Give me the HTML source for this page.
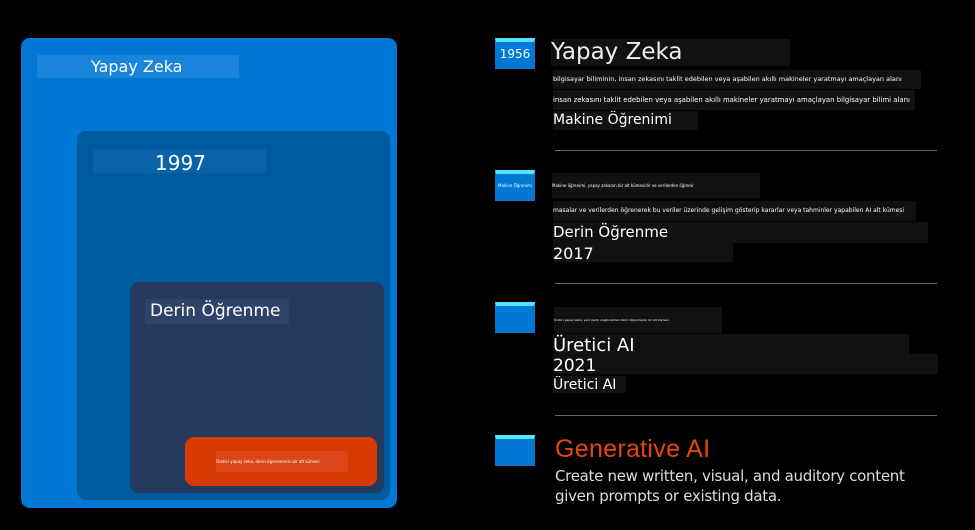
<!DOCTYPE html><html><head><meta charset="utf-8"><style>
body{margin:0;width:975px;height:530px;background:#000;position:relative;overflow:hidden;font-family:"DejaVu Sans","Liberation Sans",sans-serif;color:#fff}
div{position:absolute;box-sizing:border-box}
.bx{border-radius:9px}
.lb{white-space:nowrap}
.ic{width:40px;height:31px;background:#0078d4;border:1px solid #1a6fb8;border-top:4px solid #50e6ff}
.r{background:#111;white-space:nowrap;overflow:hidden}
.hr{left:555px;width:382px;height:1px;background:#666}
.sm{font-size:7px;line-height:1}
</style></head><body>
<div class="bx" style="left:21px;top:38px;width:376px;height:470px;background:#0078d4"></div>
<div style="left:37px;top:55px;width:202px;height:23px;background:#1a84da"></div>
<div class="lb" style="left:91px;top:57px;font-size:16px">Yapay Zeka</div>
<div class="bx" style="left:77px;top:131px;width:313px;height:369px;background:#005a9e"></div>
<div style="left:93px;top:149px;width:173px;height:24px;background:#0a62a9"></div>
<div class="lb" style="left:155px;top:151px;font-size:20px">1997</div>
<div class="bx" style="left:130px;top:282px;width:254px;height:211px;background:#243a5e"></div>
<div style="left:145px;top:299px;width:144px;height:25px;background:#2d4468"></div>
<div class="lb" style="left:150px;top:301px;font-size:17px">Derin Öğrenme</div>
<div class="bx" style="left:185px;top:437px;width:192px;height:49px;background:#d83b01"></div>
<div style="left:216px;top:451px;width:132px;height:21px;background:#dc4517;font-size:4px;line-height:21px;color:#fff;white-space:nowrap;overflow:hidden">Üretici yapay zeka, derin öğrenmenin bir alt kümesi</div>

<div class="ic" style="left:495px;top:38px;font-size:12px;text-align:center;line-height:24px">1956</div>
<div class="r" style="left:551px;top:39px;width:239px;height:27px;font-size:23px;line-height:27px;color:#eee">Yapay Zeka</div>
<div class="r sm" style="left:553px;top:70px;width:368px;height:19px;line-height:19px;font-size:6.5px">bilgisayar biliminin, insan zekasını taklit edebilen veya aşabilen akıllı makineler yaratmayı amaçlayan alanı</div>
<div class="r sm" style="left:553px;top:90px;width:362px;height:20px;line-height:20px;font-size:6.9px">insan zekasını taklit edebilen veya aşabilen akıllı makineler yaratmayı amaçlayan bilgisayar bilimi alanı</div>
<div class="r" style="left:553px;top:111px;width:145px;height:19px;font-size:14px;line-height:19px">Makine Öğrenimi</div>
<div class="hr" style="top:150px"></div>

<div class="ic" style="left:495px;top:170px;font-size:4px;text-align:center;line-height:24px">Makine Öğrenimi</div>
<div class="r" style="left:552px;top:173px;width:208px;height:25px;font-size:4px;line-height:25px">Makine öğrenimi, yapay zekanın bir alt kümesidir ve verilerden öğrenir</div>
<div class="r" style="left:553px;top:201px;width:363px;height:20px;font-size:6px;line-height:20px">masalar ve verilerden öğrenerek bu veriler üzerinde gelişim gösterip kararlar veya tahminler yapabilen AI alt kümesi</div>
<div class="r" style="left:553px;top:222px;width:375px;height:21px;font-size:15px;line-height:21px">Derin Öğrenme</div>
<div class="r" style="left:553px;top:243px;width:180px;height:19px;font-size:16px;line-height:22px">2017</div>
<div class="hr" style="top:283px"></div>

<div class="ic" style="left:495px;top:302px"></div>
<div class="r" style="left:554px;top:307px;width:168px;height:26px;font-size:3px;line-height:26px">Üretici yapay zeka, yeni içerik oluşturabilen derin öğrenmenin bir alt kümesi</div>
<div class="r" style="left:553px;top:334px;width:356px;height:20px;font-size:18px;line-height:24px">Üretici AI</div>
<div class="r" style="left:553px;top:354px;width:385px;height:20px;font-size:17px;line-height:24px">2021</div>
<div class="r" style="left:553px;top:376px;width:73px;height:17px;font-size:14px;line-height:19px">Üretici AI</div>
<div class="hr" style="top:415px"></div>

<div class="ic" style="left:495px;top:435px"></div>
<div class="lb" style="left:555px;top:435px;font-size:25px;color:#e8450a;font-family:'Liberation Sans',sans-serif;letter-spacing:0.3px">Generative AI</div>
<div class="lb" style="left:555px;top:466px;font-size:15px;line-height:20px;color:#ddd;font-family:'DejaVu Sans',sans-serif;letter-spacing:-0.3px">Create new written, visual, and auditory content<br>given prompts or existing data.</div>
</body></html>
